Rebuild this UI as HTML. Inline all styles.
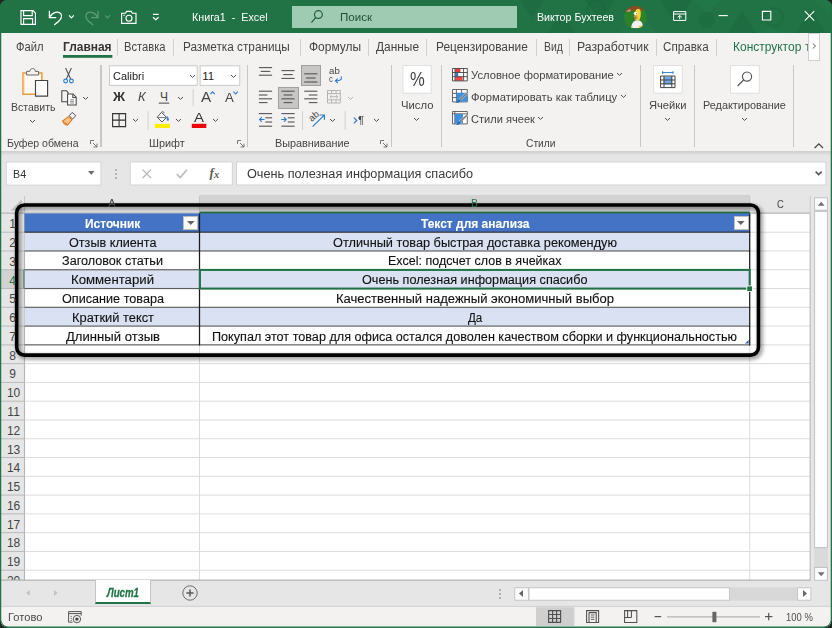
<!DOCTYPE html>
<html><head><meta charset="utf-8">
<style>
*{box-sizing:border-box;margin:0;padding:0}
html,body{width:832px;height:628px;overflow:hidden;background:#232323;font-family:"Liberation Sans",sans-serif;}
#win{position:absolute;left:0;top:0;width:832px;height:628px;border-radius:7px 7px 9px 9px;overflow:hidden;background:#217346;}
.abs{position:absolute}
.t{position:absolute;white-space:nowrap;line-height:1;transform-origin:0 0;}
#title{position:absolute;left:0;top:0;width:832px;height:33px;background:#217346;overflow:hidden}
#search{position:absolute;left:292px;top:6px;width:224.5px;height:22px;background:#9fcbb2;}
#tabs{position:absolute;left:1px;top:33px;width:829.6px;height:28px;background:#f3f2f1}
#ribbon{position:absolute;left:1px;top:61px;width:829.6px;height:90px;background:#f3f2f1}
#fbar{position:absolute;left:1px;top:151px;width:829.6px;height:44px;background:#e6e6e6}
#fshadow{position:absolute;left:1px;top:151px;width:829.6px;height:5px;background:linear-gradient(#cfcfcf,#e6e6e6)}
.vsep{position:absolute;width:1px;background:#c8c6c4}
.tsep{position:absolute;width:1px;background:#d2d0ce;top:39px;height:17px}
.box{position:absolute;background:#fff;border:1px solid #d0d0d0}
.hl{position:absolute;background:#c8c6c4;border:1px solid #a19f9d}
#sheet{position:absolute;left:1px;top:195px;width:829.6px;height:385px;background:#e6e6e6;overflow:hidden}
#grid{position:absolute;left:24px;top:18.3px;width:785px;height:367px;background:#fff;overflow:hidden}
.hline{position:absolute;left:0;height:1px;width:785px;background:#dcdcdc}
.vline{position:absolute;top:0;width:1px;height:367px;background:#dcdcdc}
.rh{position:absolute;left:0;width:23.6px;border-bottom:1px solid #c6c6c6;}
#tabbar{position:absolute;left:1px;top:580px;width:829.6px;height:26.5px;background:#e6e6e6;border-top:1px solid #bdbdbd}
#status{position:absolute;left:1px;top:606.5px;width:829.6px;height:19.5px;background:#f3f2f1;border-top:1px solid #d4d4d4}
svg{position:absolute;overflow:visible}
</style></head><body>
<div id="win">
<div id="title"><!--TITLE--></div>
<div id="tabs"></div>
<div id="ribbon"></div>
<div id="fbar"></div><div id="fshadow"></div>
<div id="sheet"><!--SHEET--></div>
<div id="tabbar"></div>
<div id="status"></div>
<svg style="left:0;top:0" width="832" height="628"><rect x="24.5" y="213.42" width="785.7" height="366.58" fill="#fff"/><rect x="199.5" y="195" width="550.2" height="18.42" fill="#d2d2d2"/><rect x="24.0" y="196" width="1.0" height="17.42" fill="#c6c6c6"/><rect x="199.0" y="196" width="1.0" height="17.42" fill="#c6c6c6"/><rect x="749.2" y="196" width="1.0" height="17.42" fill="#c6c6c6"/><rect x="809.7" y="196" width="1.0" height="17.42" fill="#c6c6c6"/><rect x="1" y="212.62" width="809.2" height="1.0" fill="#ababab"/><rect x="199.5" y="211.62" width="550.2" height="2.3" fill="#1d6b40"/></svg>
<svg style="left:9px;top:198.6px" width="14" height="14"><path d="M12.6 0.6 L12.6 11.4 L1.8 11.4 Z" fill="#bcbcbc"/></svg>
<svg style="left:0;top:0" width="832" height="628"><rect x="1" y="269.75" width="23.5" height="18.78" fill="#d2d2d2"/><rect x="1" y="231.7" width="23.5" height="1.0" fill="#bababa"/><rect x="1" y="250.48" width="23.5" height="1.0" fill="#bababa"/><rect x="1" y="269.25" width="23.5" height="1.0" fill="#bababa"/><rect x="1" y="288.03" width="23.5" height="1.0" fill="#bababa"/><rect x="1" y="306.81" width="23.5" height="1.0" fill="#bababa"/><rect x="1" y="325.59" width="23.5" height="1.0" fill="#bababa"/><rect x="1" y="344.37" width="23.5" height="1.0" fill="#bababa"/><rect x="1" y="363.14" width="23.5" height="1.0" fill="#bababa"/><rect x="1" y="381.92" width="23.5" height="1.0" fill="#bababa"/><rect x="1" y="400.7" width="23.5" height="1.0" fill="#bababa"/><rect x="1" y="419.48" width="23.5" height="1.0" fill="#bababa"/><rect x="1" y="438.26" width="23.5" height="1.0" fill="#bababa"/><rect x="1" y="457.03" width="23.5" height="1.0" fill="#bababa"/><rect x="1" y="475.81" width="23.5" height="1.0" fill="#bababa"/><rect x="1" y="494.59" width="23.5" height="1.0" fill="#bababa"/><rect x="1" y="513.37" width="23.5" height="1.0" fill="#bababa"/><rect x="1" y="532.15" width="23.5" height="1.0" fill="#bababa"/><rect x="1" y="550.92" width="23.5" height="1.0" fill="#bababa"/><rect x="1" y="569.7" width="23.5" height="1.0" fill="#bababa"/><rect x="1" y="588.48" width="23.5" height="1.0" fill="#bababa"/><rect x="23.95" y="213.42" width="1.1" height="366.58" fill="#b6b6b6"/><rect x="23.5" y="269.75" width="2.0" height="18.78" fill="#1d6b40"/><rect x="24.5" y="213.42" width="725.2" height="18.78" fill="#4472c4"/><rect x="24.5" y="232.2" width="725.2" height="18.78" fill="#d9e1f2"/><rect x="24.5" y="269.75" width="725.2" height="18.78" fill="#d9e1f2"/><rect x="24.5" y="307.31" width="725.2" height="18.78" fill="#d9e1f2"/><rect x="25.0" y="363.14" width="785.2" height="1.0" fill="#dcdcdc"/><rect x="25.0" y="381.92" width="785.2" height="1.0" fill="#dcdcdc"/><rect x="25.0" y="400.7" width="785.2" height="1.0" fill="#dcdcdc"/><rect x="25.0" y="419.48" width="785.2" height="1.0" fill="#dcdcdc"/><rect x="25.0" y="438.26" width="785.2" height="1.0" fill="#dcdcdc"/><rect x="25.0" y="457.03" width="785.2" height="1.0" fill="#dcdcdc"/><rect x="25.0" y="475.81" width="785.2" height="1.0" fill="#dcdcdc"/><rect x="25.0" y="494.59" width="785.2" height="1.0" fill="#dcdcdc"/><rect x="25.0" y="513.37" width="785.2" height="1.0" fill="#dcdcdc"/><rect x="25.0" y="532.15" width="785.2" height="1.0" fill="#dcdcdc"/><rect x="25.0" y="550.92" width="785.2" height="1.0" fill="#dcdcdc"/><rect x="25.0" y="569.7" width="785.2" height="1.0" fill="#dcdcdc"/><rect x="25.0" y="588.48" width="785.2" height="1.0" fill="#dcdcdc"/><rect x="749.7" y="231.7" width="60.5" height="1.0" fill="#dcdcdc"/><rect x="749.7" y="250.48" width="60.5" height="1.0" fill="#dcdcdc"/><rect x="749.7" y="269.25" width="60.5" height="1.0" fill="#dcdcdc"/><rect x="749.7" y="288.03" width="60.5" height="1.0" fill="#dcdcdc"/><rect x="749.7" y="306.81" width="60.5" height="1.0" fill="#dcdcdc"/><rect x="749.7" y="325.59" width="60.5" height="1.0" fill="#dcdcdc"/><rect x="749.7" y="344.37" width="60.5" height="1.0" fill="#dcdcdc"/><rect x="199.0" y="344.87" width="1.0" height="235.13" fill="#dcdcdc"/><rect x="749.2" y="344.87" width="1.0" height="235.13" fill="#dcdcdc"/><rect x="809.65" y="213.42" width="1.1" height="366.58" fill="#b4b4b4"/><rect x="24.5" y="231.62" width="725.7" height="1.15" fill="#2e2e2e"/><rect x="24.5" y="250.4" width="725.7" height="1.15" fill="#5c5c5c"/><rect x="24.5" y="269.18" width="725.7" height="1.15" fill="#5c5c5c"/><rect x="24.5" y="287.96" width="725.7" height="1.15" fill="#5c5c5c"/><rect x="24.5" y="306.73" width="725.7" height="1.15" fill="#5c5c5c"/><rect x="24.5" y="325.51" width="725.7" height="1.15" fill="#5c5c5c"/><rect x="24.5" y="344.29" width="725.7" height="1.15" fill="#5c5c5c"/><rect x="198.88" y="213.42" width="1.25" height="131.95" fill="#1c1c1c"/><rect x="749.08" y="213.42" width="1.25" height="131.95" fill="#1c1c1c"/></svg>
<div class="abs" style="left:183.3px;top:215.8px;width:15.2px;height:14.6px;background:#fbfbfb;border:1px solid #bdbdbd"></div>
<svg style="left:187.10000000000002px;top:221.4px" width="8" height="5"><path d="M0 0 L7.6 0 L3.8 4 Z" fill="#646464"/></svg>
<div class="abs" style="left:733.6px;top:215.8px;width:15.2px;height:14.6px;background:#fbfbfb;border:1px solid #bdbdbd"></div>
<svg style="left:737.4px;top:221.4px" width="8" height="5"><path d="M0 0 L7.6 0 L3.8 4 Z" fill="#646464"/></svg>
<svg style="left:0;top:0" width="832" height="628" fill="none"><rect x="199.95" y="269.90399999999994" width="549.7" height="18.677999999999997" stroke="#217346" stroke-width="2"/><rect x="746.8000000000001" y="285.93199999999996" width="5.6" height="5.6" fill="#217346" stroke="#fff" stroke-width="0.9"/></svg>
<svg style="left:745.3000000000001px;top:340.466px" width="4" height="4"><path d="M3.6 0 L3.6 3.6 L0 3.6 Z" fill="#3558b0"/></svg>
<svg style="left:0;top:0" width="832" height="628"><rect x="810.8" y="195" width="20.8" height="385" fill="#e6e6e6"/><rect x="814.2" y="197.4" width="13.6" height="382.6" fill="#dadada"/></svg>
<svg style="left:0;top:0" width="832" height="628"><g fill="#fdfdfd" stroke="#c2c2c2" stroke-width="1"><rect x="814.6" y="197.8" width="12.8" height="12.4"/><rect x="814.6" y="211.4" width="12.8" height="336.2" fill="#fff"/><rect x="814.6" y="567.4" width="12.8" height="12.4"/></g><path d="M817.8 205.8 L824.6 205.8 L821.2 201.8 Z M817.8 572 L824.6 572 L821.2 576 Z" fill="#707070"/></svg>
<svg style="left:0;top:0" width="832" height="628" fill="none"><defs><filter id="osh" x="-5%" y="-10%" width="110%" height="125%"><feGaussianBlur in="SourceAlpha" stdDeviation="2.1"/><feOffset dx="2" dy="2"/><feComponentTransfer><feFuncA type="linear" slope="0.52"/></feComponentTransfer><feMerge><feMergeNode/><feMergeNode in="SourceGraphic"/></feMerge></filter></defs>
<rect x="16.65" y="205.05" width="741.8" height="150.1" rx="7.8" stroke="#000" stroke-width="3.6" filter="url(#osh)"/></svg>
<span class="t" style="left:9.36px;top:217.20px;font:normal normal 12px 'Liberation Sans',sans-serif;color:#444;transform:scaleX(1.0000);">1</span>
<span class="t" style="left:9.36px;top:235.98px;font:normal normal 12px 'Liberation Sans',sans-serif;color:#444;transform:scaleX(1.0000);">2</span>
<span class="t" style="left:9.36px;top:254.75px;font:normal normal 12px 'Liberation Sans',sans-serif;color:#444;transform:scaleX(1.0000);">3</span>
<span class="t" style="left:9.36px;top:273.53px;font:normal normal 12px 'Liberation Sans',sans-serif;color:#217346;transform:scaleX(1.0000);">4</span>
<span class="t" style="left:9.36px;top:292.31px;font:normal normal 12px 'Liberation Sans',sans-serif;color:#444;transform:scaleX(1.0000);">5</span>
<span class="t" style="left:9.36px;top:311.09px;font:normal normal 12px 'Liberation Sans',sans-serif;color:#444;transform:scaleX(1.0000);">6</span>
<span class="t" style="left:9.36px;top:329.87px;font:normal normal 12px 'Liberation Sans',sans-serif;color:#444;transform:scaleX(1.0000);">7</span>
<span class="t" style="left:9.36px;top:348.64px;font:normal normal 12px 'Liberation Sans',sans-serif;color:#444;transform:scaleX(1.0000);">8</span>
<span class="t" style="left:9.36px;top:367.42px;font:normal normal 12px 'Liberation Sans',sans-serif;color:#444;transform:scaleX(1.0000);">9</span>
<span class="t" style="left:6.92px;top:386.20px;font:normal normal 12px 'Liberation Sans',sans-serif;color:#444;transform:scaleX(1.0000);">10</span>
<span class="t" style="left:7.37px;top:404.98px;font:normal normal 12px 'Liberation Sans',sans-serif;color:#444;transform:scaleX(1.0000);">11</span>
<span class="t" style="left:6.92px;top:423.76px;font:normal normal 12px 'Liberation Sans',sans-serif;color:#444;transform:scaleX(1.0000);">12</span>
<span class="t" style="left:6.92px;top:442.53px;font:normal normal 12px 'Liberation Sans',sans-serif;color:#444;transform:scaleX(1.0000);">13</span>
<span class="t" style="left:6.92px;top:461.31px;font:normal normal 12px 'Liberation Sans',sans-serif;color:#444;transform:scaleX(1.0000);">14</span>
<span class="t" style="left:6.92px;top:480.09px;font:normal normal 12px 'Liberation Sans',sans-serif;color:#444;transform:scaleX(1.0000);">15</span>
<span class="t" style="left:6.92px;top:498.87px;font:normal normal 12px 'Liberation Sans',sans-serif;color:#444;transform:scaleX(1.0000);">16</span>
<span class="t" style="left:6.92px;top:517.65px;font:normal normal 12px 'Liberation Sans',sans-serif;color:#444;transform:scaleX(1.0000);">17</span>
<span class="t" style="left:6.92px;top:536.42px;font:normal normal 12px 'Liberation Sans',sans-serif;color:#444;transform:scaleX(1.0000);">18</span>
<span class="t" style="left:6.92px;top:555.20px;font:normal normal 12px 'Liberation Sans',sans-serif;color:#444;transform:scaleX(1.0000);">19</span>
<span class="t" style="left:6.92px;top:573.98px;font:normal normal 12px 'Liberation Sans',sans-serif;color:#444;transform:scaleX(1.0000);">20</span>
<span class="t" style="left:108.40px;top:197.20px;font:normal normal 11.2px 'Liberation Sans',sans-serif;color:#444;transform:scaleX(1.0444);">A</span>
<span class="t" style="left:471.40px;top:197.20px;font:normal normal 11.2px 'Liberation Sans',sans-serif;color:#217346;transform:scaleX(0.9372);">B</span>
<span class="t" style="left:777.00px;top:197.50px;font:normal normal 11.2px 'Liberation Sans',sans-serif;color:#444;transform:scaleX(0.8402);">C</span>
<span class="t" style="left:84.85px;top:216.90px;font:normal bold 12.5px 'Liberation Sans',sans-serif;color:#fff;transform:scaleX(0.9540);-webkit-text-stroke:0.12px #fff;">Источник</span>
<span class="t" style="left:68.75px;top:235.68px;font:normal normal 12.5px 'Liberation Sans',sans-serif;color:#111;transform:scaleX(1.0108);-webkit-text-stroke:0.12px #111;">Отзыв клиента</span>
<span class="t" style="left:62.00px;top:254.45px;font:normal normal 12.5px 'Liberation Sans',sans-serif;color:#111;transform:scaleX(1.0102);-webkit-text-stroke:0.12px #111;">Заголовок статьи</span>
<span class="t" style="left:71.00px;top:273.23px;font:normal normal 12.5px 'Liberation Sans',sans-serif;color:#111;transform:scaleX(1.0542);-webkit-text-stroke:0.12px #111;">Комментарий</span>
<span class="t" style="left:61.50px;top:292.01px;font:normal normal 12.5px 'Liberation Sans',sans-serif;color:#111;transform:scaleX(1.0110);-webkit-text-stroke:0.12px #111;">Описание товара</span>
<span class="t" style="left:71.50px;top:310.79px;font:normal normal 12.5px 'Liberation Sans',sans-serif;color:#111;transform:scaleX(1.0292);-webkit-text-stroke:0.12px #111;">Краткий текст</span>
<span class="t" style="left:65.50px;top:329.57px;font:normal normal 12.5px 'Liberation Sans',sans-serif;color:#111;transform:scaleX(1.0474);-webkit-text-stroke:0.12px #111;">Длинный отзыв</span>
<span class="t" style="left:420.65px;top:216.90px;font:normal bold 12.5px 'Liberation Sans',sans-serif;color:#fff;transform:scaleX(0.9574);-webkit-text-stroke:0.12px #fff;">Текст для анализа</span>
<span class="t" style="left:332.90px;top:235.68px;font:normal normal 12.5px 'Liberation Sans',sans-serif;color:#111;transform:scaleX(1.0192);-webkit-text-stroke:0.12px #111;">Отличный товар быстрая доставка рекомендую</span>
<span class="t" style="left:388.15px;top:254.45px;font:normal normal 12.5px 'Liberation Sans',sans-serif;color:#111;transform:scaleX(0.9992);-webkit-text-stroke:0.12px #111;">Excel: подсчет слов в ячейках</span>
<span class="t" style="left:362.15px;top:273.23px;font:normal normal 12.5px 'Liberation Sans',sans-serif;color:#111;transform:scaleX(1.0128);-webkit-text-stroke:0.12px #111;">Очень полезная информация спасибо</span>
<span class="t" style="left:335.90px;top:292.01px;font:normal normal 12.5px 'Liberation Sans',sans-serif;color:#111;transform:scaleX(1.0424);-webkit-text-stroke:0.12px #111;">Качественный надежный экономичный выбор</span>
<span class="t" style="left:467.75px;top:310.79px;font:normal normal 12.5px 'Liberation Sans',sans-serif;color:#111;transform:scaleX(0.9273);-webkit-text-stroke:0.12px #111;">Да</span>
<span class="t" style="left:212.40px;top:329.57px;font:normal normal 12.5px 'Liberation Sans',sans-serif;color:#111;transform:scaleX(1.0099);-webkit-text-stroke:0.12px #111;">Покупал этот товар для офиса остался доволен качеством сборки и функциональностью</span>
<svg style="left:0;top:0" width="832" height="33" viewBox="0 0 832 33">
<g fill="#1c683d" opacity=".55">
<circle cx="707" cy="20" r="8"/>
<path d="M796 33 L811 9 L826 33 Z"/>
<path d="M660 0 L676 24 L692 0 Z"/>
<path d="M728 33 L742 10 L756 33 Z"/>
<path d="M585 0 L600 22 L615 0 Z"/>
<path d="M548 33 L562 12 L576 33 Z"/>
<path d="M520 0 L532 18 L544 0 Z"/>
</g>
<g fill="none" stroke="#1c683d" stroke-width="2.2" opacity=".5"><circle cx="774" cy="17" r="9"/><circle cx="596" cy="10" r="9"/></g>
<g fill="#278250" opacity=".3">
<path d="M692 0 L722 0 L707 12 Z"/>
<path d="M756 33 L770 28 L784 33 Z"/>
<path d="M620 33 L640 8 L655 33 Z"/>
<path d="M812 0 L832 0 L832 14 Z"/>
</g></svg>
<div id="search"></div>
<svg style="left:0;top:0" width="832" height="33" fill="none" stroke="#fff" stroke-width="1.15">
<path d="M21 10.6 H33 L35.4 13 V24.4 H21 Z M23.6 10.8 V15.6 H32.2 V10.8 M23.6 24.2 V18.6 H32.6 V24.2"/>
<path d="M49.4 10.8 V17.6 H56.2" stroke-width="1.3"/>
<path d="M49.8 17.2 C52.5 12.2 58.5 10.6 61 14 C63.6 17.8 59 21.6 54.2 25" stroke-width="1.3"/>
<path d="M69 15.4 L71.4 17.8 L73.8 15.4" stroke-width="1.2"/>
<g stroke="#5d9b7a"><path d="M98 10.8 V17.6 H91.2" stroke-width="1.3"/>
<path d="M97.6 17.2 C94.9 12.2 88.9 10.6 86.4 14 C83.8 17.8 88.4 21.6 93.2 25" stroke-width="1.3"/>
<path d="M105.2 15.4 L107.6 17.8 L110 15.4" stroke-width="1.2"/></g>
<path d="M121.6 13.2 H125.4 L126.6 11.4 H131.2 L132.4 13.2 H136 V23.4 H121.6 Z"/>
<circle cx="129" cy="18.2" r="3"/><path d="M123.4 15.4 H124.6" />
<path d="M153 14.4 H158.6" stroke-width="1.2"/><path d="M153 17.2 L155.8 19.8 L158.6 17.2" stroke-width="1.2"/>
<g stroke="#1f5c3a" stroke-width="1.2"><circle cx="318.4" cy="14.6" r="3.9"/><path d="M315.6 17.6 L311.4 22.6"/></g>
<path d="M673.6 11.6 H685.8 V20.4 H673.6 Z M673.6 14 H685.8" stroke-width="1"/>
<path d="M679.7 19.2 V15.6 M677.6 17.4 L679.7 15.4 L681.8 17.4" stroke-width="1"/>
<path d="M718.6 15.6 H727.8" stroke-width="1.1"/>
<path d="M762.4 11.4 H770.8 V20 H762.4 Z" stroke-width="1.1"/>
<path d="M804.8 11.2 L814.2 20.6 M814.2 11.2 L804.8 20.6" stroke-width="1.1"/>
</svg>
<span class="t" style="left:192.00px;top:10.80px;font:normal normal 11.5px 'Liberation Sans',sans-serif;color:#fff;transform:scaleX(0.9339);">Книга1&nbsp; -&nbsp; Excel</span>
<span class="t" style="left:339.80px;top:10.80px;font:normal normal 11.5px 'Liberation Sans',sans-serif;color:#1f4f36;transform:scaleX(1.0039);">Поиск</span>
<span class="t" style="left:536.50px;top:11.40px;font:normal normal 11.5px 'Liberation Sans',sans-serif;color:#fff;transform:scaleX(0.9267);">Виктор Бухтеев</span>
<svg style="left:623.9px;top:6.1px" width="22.6" height="22.6" viewBox="0 0 22.4 22.4">
<defs><clipPath id="av"><circle cx="11.2" cy="11.2" r="11.2"/></clipPath></defs>
<g clip-path="url(#av)"><rect width="22.4" height="22.4" fill="#2d8329"/>
<path d="M0 0 H22.4 V3.6 L18 4.6 L11 4.2 L4 5.4 L0 5.8 Z" fill="#8a4a22"/>
<path d="M2 5.4 C4 3.6 5.4 3.2 7 3.6 L6 5.8 Z" fill="#c89a72"/>
<path d="M11.4 5.2 C11.6 1.8 16.4 1.6 16.6 5.6 C17 9 16.2 12.4 15 14.4 L11.6 14.6 C10.6 12 11 8 11.4 5.2 Z" fill="#f7d230"/>
<ellipse cx="11.6" cy="7.4" rx="1.9" ry="1.6" fill="#fff"/><circle cx="12.4" cy="7.6" r="0.5" fill="#222"/>
<path d="M9.8 9.4 C11 8.8 13.2 9.4 13.6 11 C13.8 12.8 12.8 13.8 11.6 13.8 C10.6 13.4 9.6 11.4 9.8 9.4 Z" fill="#c9a04a"/>
<path d="M10.4 11.6 H12" stroke="#3a2a10" stroke-width="0.6"/>
<path d="M7 21.8 C7.4 17.4 9.6 14.8 12 14.4 L15.2 14.4 C17.6 15.4 18.8 17.6 18.4 20.2 L15.6 22 Z" fill="#f1f1f4"/>
<path d="M14.4 20.6 C15.4 19.2 17.4 19 18 20 C17.6 21.4 15.8 22 14.6 21.8 Z" fill="#f2c828"/>
<path d="M6.8 21 L8.2 19.8 L8.4 21.6 Z" fill="#d9a520"/>
</g></svg>
<span class="t" style="left:15.50px;top:40.00px;font:normal normal 12px 'Liberation Sans',sans-serif;color:#444;transform:scaleX(0.9317);">Файл</span>
<span class="t" style="left:63.20px;top:40.00px;font:normal bold 12px 'Liberation Sans',sans-serif;color:#333;transform:scaleX(0.9956);">Главная</span>
<svg style="left:0;top:0" width="832" height="628"><rect x="63" y="55" width="49.4" height="2.8" fill="#217346"/></svg>
<span class="t" style="left:124.30px;top:40.00px;font:normal normal 12px 'Liberation Sans',sans-serif;color:#444;transform:scaleX(0.9303);">Вставка</span>
<span class="t" style="left:183.30px;top:40.00px;font:normal normal 12px 'Liberation Sans',sans-serif;color:#444;transform:scaleX(0.9800);">Разметка страницы</span>
<span class="t" style="left:308.50px;top:40.00px;font:normal normal 12px 'Liberation Sans',sans-serif;color:#444;transform:scaleX(0.9958);">Формулы</span>
<span class="t" style="left:375.50px;top:40.00px;font:normal normal 12px 'Liberation Sans',sans-serif;color:#444;transform:scaleX(0.9917);">Данные</span>
<span class="t" style="left:435.50px;top:40.00px;font:normal normal 12px 'Liberation Sans',sans-serif;color:#444;transform:scaleX(0.9906);">Рецензирование</span>
<span class="t" style="left:543.50px;top:40.00px;font:normal normal 12px 'Liberation Sans',sans-serif;color:#444;transform:scaleX(0.8656);">Вид</span>
<span class="t" style="left:576.80px;top:40.00px;font:normal normal 12px 'Liberation Sans',sans-serif;color:#444;transform:scaleX(1.0217);">Разработчик</span>
<span class="t" style="left:662.80px;top:40.00px;font:normal normal 12px 'Liberation Sans',sans-serif;color:#444;transform:scaleX(0.9707);">Справка</span>
<span class="t" style="left:733.30px;top:40.00px;font:normal normal 12px 'Liberation Sans',sans-serif;color:#217346;transform:scaleX(0.9982);">Конструктор</span>
<span class="t" style="left:804.80px;top:40.00px;font:normal normal 12px 'Liberation Sans',sans-serif;color:#217346;transform:scaleX(1.0545);">т</span>
<div class="tsep" style="left:116.5px"></div>
<div class="tsep" style="left:172.8px"></div>
<div class="tsep" style="left:299.5px"></div>
<div class="tsep" style="left:367.5px"></div>
<div class="tsep" style="left:426.1px"></div>
<div class="tsep" style="left:536.3px"></div>
<div class="tsep" style="left:568.8px"></div>
<div class="tsep" style="left:655.5px"></div>
<div class="tsep" style="left:715.5px"></div>
<div class="abs" style="left:808.2px;top:33.2px;width:11.4px;height:27.4px;background:#fff;border:1px solid #d2d0ce"></div>
<svg style="left:811.8px;top:43.2px" width="5" height="7" fill="none" stroke="#606060" stroke-width="1"><path d="M0.8 0.5 L3.6 3 L0.8 5.5"/></svg>
<div class="vsep" style="left:100.4px;top:65px;height:82px;width:1.2px"></div>
<div class="vsep" style="left:246.9px;top:65px;height:82px;width:1.2px"></div>
<div class="vsep" style="left:390.5px;top:65px;height:82px;width:1.2px"></div>
<div class="vsep" style="left:441.09999999999997px;top:65px;height:82px;width:1.2px"></div>
<div class="vsep" style="left:640.1px;top:65px;height:82px;width:1.2px"></div>
<div class="vsep" style="left:693.6999999999999px;top:65px;height:82px;width:1.2px"></div>
<div class="vsep" style="left:793.3px;top:65px;height:82px;width:1.2px"></div>
<svg style="left:0;top:0" width="832" height="160" fill="none">
<path d="M23 72.9 H41.9 V94.2 H23 Z" fill="#fcf9f4" stroke="#ea9a3c" stroke-width="1.5"/>
<path d="M23.9 73.6 V93.4" stroke="#f6c56f" stroke-width="1"/>
<path d="M26.6 75 V71.4 H29.8 C29.8 67.6 35.4 67.6 35.4 71.4 H38.6 V75 Z" fill="#f3f2f1" stroke="#6a6a6a" stroke-width="1"/>
<path d="M35.5 80.5 H47.6 V96.1 H35.5 Z" fill="#fff" stroke="#444" stroke-width="1.15"/>
</svg>
<span class="t" style="left:10.50px;top:100.70px;font:normal normal 11.5px 'Liberation Sans',sans-serif;color:#444;transform:scaleX(0.9128);">Вставить</span>
<svg style="left:30.0px;top:119.6px" width="5" height="3.4" fill="none" stroke="#505050" stroke-width="1.0"><path d="M0 0 L2.5 2.4 L5 0"/></svg>
<svg style="left:62px;top:67px" width="14" height="18" fill="none">
<path d="M3.6 1 L8.6 12 M9.4 1 L4.4 12" stroke="#555" stroke-width="1.1"/>
<circle cx="3.6" cy="14" r="1.9" stroke="#2b7cd3" stroke-width="1.1"/><circle cx="9.4" cy="14" r="1.9" stroke="#2b7cd3" stroke-width="1.1"/></svg>
<svg style="left:60.6px;top:89.6px" width="17" height="17" fill="none" stroke="#444" stroke-width="1.05">
<path d="M6.4 11.8 H0.8 V0.8 H5.4 L7.2 2.6 V3.8" />
<path d="M6.6 4 H12 L15.2 7.2 V15 H6.6 Z" fill="#fff"/><path d="M11.8 4.2 V7.4 H15"/>
<path d="M9 9.8 H13 M9 11.4 H13 M9 13 H13" stroke="#777" stroke-width="0.8"/></svg>
<svg style="left:82.5px;top:97.0px" width="5" height="3.4" fill="none" stroke="#505050" stroke-width="1.0"><path d="M0 0 L2.5 2.4 L5 0"/></svg>
<svg style="left:61px;top:111px" width="17" height="17" fill="none">
<path d="M11.2 1.4 L14.8 4.6 L11.6 8 L8.2 4.8 Z" fill="#f3f2f1" stroke="#555" stroke-width="1"/>
<path d="M7.6 5.6 L11 8.8 L6.4 14.2 C4.6 13.8 2.4 12 1.6 10 Z" fill="#f7c48a" stroke="#e4791f" stroke-width="1.1"/>
<path d="M3.6 11 L6 13.2" stroke="#e4791f" stroke-width="1"/></svg>
<span class="t" style="left:6.80px;top:137.20px;font:normal normal 11.5px 'Liberation Sans',sans-serif;color:#444;transform:scaleX(0.9148);">Буфер обмена</span>
<svg style="left:90.3px;top:140.3px" width="8" height="8" fill="none" stroke="#666" stroke-width="0.9"><path d="M0.5 4 V0.5 H4"/><path d="M3 3 L7 7 M7 3.6 V7 H3.6"/></svg>
<svg style="left:0;top:0" width="832" height="628"><rect x="109" y="65.4" width="88.6" height="20.3" fill="#c4c2c0"/><rect x="109.85" y="66.25" width="86.9" height="18.6" fill="#fff"/><rect x="199.7" y="65.4" width="40.5" height="20.3" fill="#c4c2c0"/><rect x="200.55" y="66.25" width="38.8" height="18.6" fill="#fff"/></svg>
<span class="t" style="left:112.60px;top:70.00px;font:normal normal 11.5px 'Liberation Sans',sans-serif;color:#222;transform:scaleX(0.9572);">Calibri</span>
<svg style="left:189.5px;top:75.0px" width="5" height="3.4" fill="none" stroke="#505050" stroke-width="1.0"><path d="M0 0 L2.5 2.4 L5 0"/></svg>
<span class="t" style="left:202.32px;top:70.00px;font:normal normal 11.5px 'Liberation Sans',sans-serif;color:#222;transform:scaleX(1.0000);">11</span>
<svg style="left:231.3px;top:75.0px" width="5" height="3.4" fill="none" stroke="#505050" stroke-width="1.0"><path d="M0 0 L2.5 2.4 L5 0"/></svg>
<span class="t" style="left:113.00px;top:90.30px;font:normal bold 12px 'Liberation Sans',sans-serif;color:#333;transform:scaleX(1.1050);">Ж</span>
<span class="t" style="left:137.60px;top:90.30px;font:italic normal 12px 'Liberation Sans',sans-serif;color:#444;transform:scaleX(1.0737);">К</span>
<span class="t" style="left:160.00px;top:90.30px;font:normal normal 12px 'Liberation Sans',sans-serif;color:#444;transform:scaleX(1.0000);">Ч</span>
<svg style="left:0;top:0" width="832" height="628"><rect x="158.8" y="102.6" width="10.4" height="1" fill="#444"/></svg>
<svg style="left:178.0px;top:97.0px" width="5" height="3.4" fill="none" stroke="#505050" stroke-width="1.0"><path d="M0 0 L2.5 2.4 L5 0"/></svg>
<svg style="left:0;top:0" width="832" height="628"><rect x="192.6" y="88.8" width="1" height="17.4" fill="#d2d0ce"/></svg>
<span class="t" style="left:201.30px;top:88.00px;font:normal normal 15.2px 'Liberation Sans',sans-serif;color:#444;transform:scaleX(1.0059);">A</span>
<svg style="left:210.2px;top:90.8px" width="6" height="4" fill="none" stroke="#2b7cd3" stroke-width="1.1"><path d="M0.4 3.2 L2.6 0.8 L4.8 3.2"/></svg>
<span class="t" style="left:225.00px;top:91.00px;font:normal normal 12.5px 'Liberation Sans',sans-serif;color:#444;transform:scaleX(1.0547);">A</span>
<svg style="left:233px;top:91.2px" width="6" height="4" fill="none" stroke="#2b7cd3" stroke-width="1.1"><path d="M0.4 0.6 L2.6 3 L4.8 0.6"/></svg>
<svg style="left:111.8px;top:112.6px" width="14.2" height="14.2" fill="none" stroke="#333" stroke-width="1.1"><path d="M0.6 0.6 H13.6 V13.6 H0.6 Z M7.1 0.6 V13.6 M0.6 7.1 H13.6"/></svg>
<svg style="left:133.3px;top:119.39999999999999px" width="5" height="3.4" fill="none" stroke="#505050" stroke-width="1.0"><path d="M0 0 L2.5 2.4 L5 0"/></svg>
<svg style="left:0;top:0" width="832" height="628"><rect x="147.6" y="111.2" width="1" height="18.8" fill="#d2d0ce"/></svg>
<svg style="left:155px;top:111px" width="16" height="13" fill="none">
<path d="M6.4 1.4 L11.6 6.4 L7 11 L2.2 6.2 Z" fill="#fff" stroke="#555" stroke-width="1"/>
<path d="M3 6.6 H11" stroke="#555" stroke-width="0.8"/>
<path d="M12.2 5.4 C13.6 7.4 14.2 8.6 13 9.8 C11.8 9.4 12 7.4 12.2 5.4 Z" fill="#2b7cd3" stroke="#2b7cd3" stroke-width="0.6"/>
<path d="M6.6 1.2 C7.6 0 9.2 0.6 8.8 2.2" stroke="#555" stroke-width="0.9"/></svg>
<svg style="left:0;top:0" width="832" height="628"><rect x="155" y="123.8" width="15" height="4.2" fill="#ffee00"/></svg>
<svg style="left:176.3px;top:119.39999999999999px" width="5" height="3.4" fill="none" stroke="#505050" stroke-width="1.0"><path d="M0 0 L2.5 2.4 L5 0"/></svg>
<span class="t" style="left:194.30px;top:110.40px;font:normal normal 13.2px 'Liberation Sans',sans-serif;color:#333;transform:scaleX(1.1368);">A</span>
<svg style="left:0;top:0" width="832" height="628"><rect x="191.8" y="123.8" width="14.5" height="4.2" fill="#f00000"/></svg>
<svg style="left:213.0px;top:119.39999999999999px" width="5" height="3.4" fill="none" stroke="#505050" stroke-width="1.0"><path d="M0 0 L2.5 2.4 L5 0"/></svg>
<span class="t" style="left:149.30px;top:137.20px;font:normal normal 11.5px 'Liberation Sans',sans-serif;color:#444;transform:scaleX(0.9434);">Шрифт</span>
<svg style="left:236.7px;top:140.3px" width="8" height="8" fill="none" stroke="#666" stroke-width="0.9"><path d="M0.5 4 V0.5 H4"/><path d="M3 3 L7 7 M7 3.6 V7 H3.6"/></svg>
<div class="hl" style="left:300.6px;top:64.6px;width:20.6px;height:21px"></div>
<div class="hl" style="left:278px;top:87px;width:20.8px;height:21.6px"></div>
<svg style="left:0;top:0" width="832" height="628"><rect x="258.9" y="67.05" width="13.2" height="1.1" fill="#555"/><rect x="260.7" y="70.85" width="9.6" height="1.1" fill="#555"/><rect x="258.9" y="74.65" width="13.2" height="1.1" fill="#555"/><rect x="281.4" y="70.05" width="13.2" height="1.1" fill="#555"/><rect x="283.2" y="74.05" width="9.6" height="1.1" fill="#555"/><rect x="281.4" y="77.85" width="13.2" height="1.1" fill="#555"/><rect x="304.2" y="73.25" width="13.2" height="1.1" fill="#555"/><rect x="306.0" y="77.45" width="9.6" height="1.1" fill="#555"/><rect x="304.2" y="81.45" width="13.2" height="1.1" fill="#555"/></svg>
<span class="t" style="left:329.20px;top:66.40px;font:normal normal 9px 'Liberation Sans',sans-serif;color:#444;transform:scaleX(1.0783);">ab</span>
<span class="t" style="left:329.40px;top:74.20px;font:normal normal 9px 'Liberation Sans',sans-serif;color:#444;transform:scaleX(0.8444);">c</span>
<svg style="left:334px;top:76px" width="9" height="8" fill="none" stroke="#2b7cd3" stroke-width="1.1"><path d="M7.2 0.4 C8.2 3.6 6.2 5 1.6 4.8 M3.8 2.6 L1.4 4.8 L3.8 7"/></svg>
<svg style="left:0;top:0" width="832" height="628"><rect x="258.9" y="90.65" width="13.2" height="1.1" fill="#555"/><rect x="258.9" y="94.45" width="8.6" height="1.1" fill="#555"/><rect x="258.9" y="98.25" width="13.2" height="1.1" fill="#555"/><rect x="258.9" y="102.05" width="8.6" height="1.1" fill="#555"/><rect x="281.4" y="90.65" width="13.2" height="1.1" fill="#555"/><rect x="283.7" y="94.45" width="8.6" height="1.1" fill="#555"/><rect x="281.4" y="98.25" width="13.2" height="1.1" fill="#555"/><rect x="283.7" y="102.05" width="8.6" height="1.1" fill="#555"/><rect x="304.2" y="90.65" width="13.2" height="1.1" fill="#555"/><rect x="308.8" y="94.45" width="8.6" height="1.1" fill="#555"/><rect x="304.2" y="98.25" width="13.2" height="1.1" fill="#555"/><rect x="308.8" y="102.05" width="8.6" height="1.1" fill="#555"/></svg>
<svg style="left:327px;top:90.4px" width="14" height="14" fill="none" stroke="#b5b3b1" stroke-width="1">
<path d="M0.5 0.5 H13.3 V13 H0.5 Z M0.5 3.6 H13.3 M0.5 9.8 H13.3 M4.6 0.5 V3.6 M9 0.5 V3.6 M4.6 9.8 V13 M9 9.8 V13"/>
<path d="M3 6.7 H10.8 M4.6 5.2 L3 6.7 L4.6 8.2 M9.2 5.2 L10.8 6.7 L9.2 8.2"/></svg>
<svg style="left:348.3px;top:97.0px" width="5" height="3.4" fill="none" stroke="#b5b3b1" stroke-width="1.0"><path d="M0 0 L2.5 2.4 L5 0"/></svg>
<svg style="left:0;top:0" width="832" height="628"><rect x="258.9" y="113.05" width="13.2" height="1.1" fill="#555"/><rect x="258.9" y="125.65" width="13.2" height="1.1" fill="#555"/><rect x="265.3" y="117.25" width="6.8" height="1.1" fill="#555"/><rect x="265.3" y="121.45" width="6.8" height="1.1" fill="#555"/></svg>
<svg style="left:258.9px;top:116.4px" width="6" height="7" fill="none" stroke="#2b7cd3" stroke-width="1.1"><path d="M5.6 3.5 H0.8 M2.8 1.2 L0.6 3.5 L2.8 5.8"/></svg>
<svg style="left:0;top:0" width="832" height="628"><rect x="281.4" y="113.05" width="13.2" height="1.1" fill="#555"/><rect x="281.4" y="125.65" width="13.2" height="1.1" fill="#555"/><rect x="287.8" y="117.25" width="6.8" height="1.1" fill="#555"/><rect x="287.8" y="121.45" width="6.8" height="1.1" fill="#555"/></svg>
<svg style="left:281.4px;top:116.4px" width="6" height="7" fill="none" stroke="#2b7cd3" stroke-width="1.1"><path d="M0.2 3.5 H5 M3 1.2 L5.2 3.5 L3 5.8"/></svg>
<svg style="left:0;top:0" width="832" height="628"><rect x="302" y="111.2" width="1" height="18.8" fill="#d2d0ce"/></svg>
<svg style="left:309.4px;top:109.4px" width="20" height="20" fill="none">
<text x="1" y="10" font-family="Liberation Sans" font-size="9.5" fill="#444" stroke="none" transform="rotate(-40 6 9)">ab</text>
<path d="M3.6 17.6 L15 6.4 M10.6 6 H15.4 V10.8" stroke="#2b7cd3" stroke-width="1.2"/></svg>
<svg style="left:329.5px;top:119.39999999999999px" width="5" height="3.4" fill="none" stroke="#505050" stroke-width="1.0"><path d="M0 0 L2.5 2.4 L5 0"/></svg>
<svg style="left:0;top:0" width="832" height="628"><rect x="344.6" y="111.2" width="1" height="18.8" fill="#d2d0ce"/></svg>
<svg style="left:353px;top:116.6px" width="5" height="7" fill="none" stroke="#2b7cd3" stroke-width="1.2"><path d="M0.8 0.6 L3.8 3.5 L0.8 6.4"/></svg>
<span class="t" style="left:358.40px;top:113.60px;font:normal normal 11px 'Liberation Sans',sans-serif;color:#444;transform:scaleX(1.0470);">¶</span>
<svg style="left:373.5px;top:119.39999999999999px" width="5" height="3.4" fill="none" stroke="#505050" stroke-width="1.0"><path d="M0 0 L2.5 2.4 L5 0"/></svg>
<span class="t" style="left:274.50px;top:137.20px;font:normal normal 11.5px 'Liberation Sans',sans-serif;color:#444;transform:scaleX(0.9410);">Выравнивание</span>
<svg style="left:380.3px;top:140.3px" width="8" height="8" fill="none" stroke="#666" stroke-width="0.9"><path d="M0.5 4 V0.5 H4"/><path d="M3 3 L7 7 M7 3.6 V7 H3.6"/></svg>
<svg style="left:0;top:0" width="832" height="628"><rect x="402.5" y="65.2" width="29.1" height="28.4" fill="#dddbd9"/><rect x="403.35" y="66.05" width="27.4" height="26.7" fill="#fff"/></svg>
<span class="t" style="left:409.60px;top:66.60px;font:normal normal 21px 'Liberation Sans',sans-serif;color:#444;transform:scaleX(0.7920);">%</span>
<span class="t" style="left:400.60px;top:98.90px;font:normal normal 11.5px 'Liberation Sans',sans-serif;color:#444;transform:scaleX(0.9795);">Число</span>
<svg style="left:413.9px;top:118.39999999999999px" width="5" height="3.4" fill="none" stroke="#505050" stroke-width="1.0"><path d="M0 0 L2.5 2.4 L5 0"/></svg>
<svg style="left:452.4px;top:67.6px" width="16" height="14" fill="none">
<rect x="0.5" y="0.5" width="14.8" height="12.4" fill="#fff"/>
<rect x="3.2" y="0.6" width="5.2" height="3.8" fill="#f0383a"/>
<rect x="3.2" y="4.6" width="3" height="4" fill="#2b7cd3"/>
<rect x="3.2" y="8.8" width="7.4" height="4" fill="#f0484a"/>
<path d="M0.5 0.5 H15.3 V12.9 H0.5 Z M0.5 4.5 H15.3 M0.5 8.7 H15.3 M3 0.5 V12.9 M11.6 0.5 V12.9" stroke="#444" stroke-width="0.9"/></svg>
<svg style="left:452.4px;top:89.2px" width="17" height="15" fill="none">
<rect x="0.5" y="0.5" width="14.8" height="12.4" fill="#fff"/>
<path d="M0.5 0.5 H15.3 V12.9 H0.5 Z M0.5 4.4 H15.3 M0.5 8.6 H15.3 M4.4 0.5 V12.9 M9.6 0.5 V12.9" stroke="#555" stroke-width="0.9"/>
<rect x="4.6" y="3.8" width="10.8" height="8.6" fill="#3d8fdf"/>
<path d="M14.4 3.4 L15.8 4.8 L8.6 11.6 L7 10.2 Z" fill="#7a7a7a" stroke="#f3f2f1" stroke-width="0.5"/>
<path d="M7 10 L8.8 11.8 C7.6 13.8 5.4 14.2 3.6 13.6 C5.4 13 5.6 11 7 10 Z" fill="#1e6fc4"/></svg>
<svg style="left:452.4px;top:110.8px" width="17" height="15" fill="none">
<rect x="0.5" y="0.5" width="14.8" height="12.4" fill="#fff"/>
<path d="M0.5 0.5 H15.3 V12.9 H0.5 Z M0.5 2.8 H15.3 M2.8 0.5 V12.9" stroke="#555" stroke-width="0.9"/>
<rect x="3" y="3" width="8" height="9.2" fill="#3d8fdf"/>
<path d="M14.4 3.4 L15.8 4.8 L8.6 11.6 L7 10.2 Z" fill="#7a7a7a" stroke="#f3f2f1" stroke-width="0.5"/>
<path d="M7 10 L8.8 11.8 C7.6 13.8 5.4 14.2 3.6 13.6 C5.4 13 5.6 11 7 10 Z" fill="#1e6fc4"/></svg>
<span class="t" style="left:470.60px;top:68.80px;font:normal normal 11.5px 'Liberation Sans',sans-serif;color:#444;transform:scaleX(0.9760);">Условное форматирование</span>
<svg style="left:616.9px;top:72.6px" width="5" height="3.4" fill="none" stroke="#505050" stroke-width="1.0"><path d="M0 0 L2.5 2.4 L5 0"/></svg>
<span class="t" style="left:470.60px;top:90.60px;font:normal normal 11.5px 'Liberation Sans',sans-serif;color:#444;transform:scaleX(0.9771);">Форматировать как таблицу</span>
<svg style="left:621.1px;top:94.6px" width="5" height="3.4" fill="none" stroke="#505050" stroke-width="1.0"><path d="M0 0 L2.5 2.4 L5 0"/></svg>
<span class="t" style="left:470.60px;top:112.50px;font:normal normal 11.5px 'Liberation Sans',sans-serif;color:#444;transform:scaleX(0.9627);">Стили ячеек</span>
<svg style="left:537.9px;top:116.6px" width="5" height="3.4" fill="none" stroke="#505050" stroke-width="1.0"><path d="M0 0 L2.5 2.4 L5 0"/></svg>
<span class="t" style="left:526.00px;top:137.20px;font:normal normal 11.5px 'Liberation Sans',sans-serif;color:#444;transform:scaleX(0.8901);">Стили</span>
<svg style="left:0;top:0" width="832" height="628"><rect x="653.3" y="65.2" width="29.3" height="28.4" fill="#dddbd9"/><rect x="654.15" y="66.05" width="27.6" height="26.7" fill="#fff"/></svg>
<svg style="left:660px;top:70.8px" width="16" height="18" fill="none">
<path d="M2.6 1.6 H13 M2.6 0.2 V3 M13 0.2 V3" stroke="#2b7cd3" stroke-width="1"/>
<rect x="3.6" y="5.6" width="8.6" height="8" fill="#6fa8e6"/>
<path d="M0.6 5 H15 V16.6 H0.6 Z M0.6 9 H15 M0.6 12.8 H15 M4 5 V16.6 M11.8 5 V16.6" stroke="#444" stroke-width="1"/></svg>
<span class="t" style="left:649.20px;top:98.90px;font:normal normal 11.5px 'Liberation Sans',sans-serif;color:#444;transform:scaleX(0.9695);">Ячейки</span>
<svg style="left:664.7px;top:118.39999999999999px" width="5" height="3.4" fill="none" stroke="#505050" stroke-width="1.0"><path d="M0 0 L2.5 2.4 L5 0"/></svg>
<svg style="left:0;top:0" width="832" height="628"><rect x="730.1" y="65.2" width="29.6" height="28.4" fill="#dddbd9"/><rect x="730.95" y="66.05" width="27.9" height="26.7" fill="#fff"/></svg>
<svg style="left:736px;top:70px" width="18" height="18" fill="none" stroke="#555" stroke-width="1.2"><circle cx="11" cy="6.6" r="4.6"/><path d="M7.6 10 L1.6 16"/></svg>
<span class="t" style="left:703.00px;top:98.90px;font:normal normal 11.5px 'Liberation Sans',sans-serif;color:#444;transform:scaleX(0.9451);">Редактирование</span>
<svg style="left:741.7px;top:118.39999999999999px" width="5" height="3.4" fill="none" stroke="#505050" stroke-width="1.0"><path d="M0 0 L2.5 2.4 L5 0"/></svg>
<svg style="left:813.6px;top:142.6px" width="10" height="6" fill="none" stroke="#444" stroke-width="1.2"><path d="M0.6 5 L4.8 0.9 L9 5"/></svg>
<svg style="left:0;top:0" width="832" height="628"><rect x="5.9" y="161.6" width="95.4" height="23.9" fill="#cfcfcf"/><rect x="6.75" y="162.45" width="93.7" height="22.2" fill="#fff"/></svg>
<span class="t" style="left:12.90px;top:168.20px;font:normal normal 11.5px 'Liberation Sans',sans-serif;color:#333;transform:scaleX(0.9305);">B4</span>
<svg style="left:88.2px;top:171px" width="7" height="4"><path d="M0 0 H6.6 L3.3 3.8 Z" fill="#6a6a6a"/></svg>
<div class="abs" style="left:114.8px;top:168.9px;width:2px;height:2px;background:#a2a2a2;border-radius:1px"></div>
<div class="abs" style="left:114.8px;top:172.7px;width:2px;height:2px;background:#a2a2a2;border-radius:1px"></div>
<div class="abs" style="left:114.8px;top:176.5px;width:2px;height:2px;background:#a2a2a2;border-radius:1px"></div>
<svg style="left:0;top:0" width="832" height="628"><rect x="129.8" y="161.5" width="102.9" height="23.9" fill="#cfcfcf"/><rect x="130.65" y="162.35" width="101.2" height="22.2" fill="#fff"/></svg>
<svg style="left:142.4px;top:169.2px" width="10" height="10" fill="none" stroke="#b6b6b6" stroke-width="1.3"><path d="M0.6 0.6 L9 9 M9 0.6 L0.6 9"/></svg>
<svg style="left:176px;top:169px" width="12" height="10" fill="none" stroke="#bcbcbc" stroke-width="1.7"><path d="M0.8 5.2 L4.2 8.6 L11 0.8"/></svg>
<svg style="left:209.2px;top:166.4px" width="14" height="16"><text x="0.4" y="11.4" font-family="Liberation Serif" font-style="italic" font-weight="bold" font-size="13" fill="#5c5c5c">f</text><text x="5" y="11.8" font-family="Liberation Serif" font-style="italic" font-weight="bold" font-size="10.5" fill="#5c5c5c">x</text></svg>
<svg style="left:0;top:0" width="832" height="628"><rect x="236.2" y="161.6" width="590.1" height="23.8" fill="#cfcfcf"/><rect x="237.05" y="162.45" width="588.4" height="22.1" fill="#fff"/></svg>
<span class="t" style="left:247.40px;top:167.00px;font:normal normal 12px 'Liberation Sans',sans-serif;color:#3a3a3a;transform:scaleX(1.0574);">Очень полезная информация спасибо</span>
<svg style="left:814.6px;top:171.2px" width="8" height="5" fill="none" stroke="#555" stroke-width="1.5"><path d="M0.6 0.6 L3.6 3.6 L6.6 0.6"/></svg>
<svg style="left:0;top:0" width="832" height="628"><rect x="1" y="580" width="830" height="26.6" fill="#e6e6e6"/><rect x="1" y="579.6" width="809.8" height="1" fill="#a6a6a6"/></svg>
<svg style="left:0;top:0" width="832" height="628"><rect x="814.6" y="567.5" width="12.8" height="12.8" fill="#fdfdfd" stroke="#c2c2c2"/><path d="M817.8 572.2 L824.6 572.2 L821.2 576.2 Z" fill="#707070"/></svg>
<svg style="left:26.2px;top:589.8px" width="4" height="6"><path d="M3.8 0 V5.8 L0 2.9 Z" fill="#c2c2c2"/></svg>
<svg style="left:53.6px;top:589.8px" width="4" height="6"><path d="M0 0 V5.8 L3.8 2.9 Z" fill="#c2c2c2"/></svg>
<div class="abs" style="left:94.6px;top:580px;width:56.8px;height:23.6px;background:#fff;border-left:1px solid #c4c4c4;border-right:1px solid #c4c4c4;border-bottom:2px solid #217346"></div>
<span class="t" style="left:106.80px;top:586.00px;font:italic bold 12px 'Liberation Sans',sans-serif;color:#217346;transform:scaleX(0.8082);-webkit-text-stroke:0.3px #217346;">Лист1</span>
<svg style="left:181.5px;top:585px" width="16" height="16" fill="none" stroke="#6e6e6e" stroke-width="1"><circle cx="8" cy="8" r="7.2"/><path d="M8 4.4 V11.6 M4.4 8 H11.6" stroke="#5a5a5a" stroke-width="1.5"/></svg>
<div class="abs" style="left:498.6px;top:588.6px;width:2px;height:2px;background:#9c9c9c;border-radius:1px"></div>
<div class="abs" style="left:498.6px;top:592.8px;width:2px;height:2px;background:#9c9c9c;border-radius:1px"></div>
<div class="abs" style="left:498.6px;top:597px;width:2px;height:2px;background:#9c9c9c;border-radius:1px"></div>
<svg style="left:0;top:0" width="832" height="628"><rect x="514.4" y="587.4" width="296.8" height="13.2" fill="#d8d8d8"/><rect x="514.4" y="587.4" width="14.4" height="13.2" fill="#c4c4c4"/><rect x="515.25" y="588.25" width="12.7" height="11.5" fill="#fdfdfd"/></svg>
<svg style="left:519.4px;top:590.4px" width="4" height="7"><path d="M4 0 V7 L0 3.5 Z" fill="#666"/></svg>
<svg style="left:0;top:0" width="832" height="628"><rect x="528.6" y="587.4" width="201.2" height="13.2" fill="#c4c4c4"/><rect x="529.45" y="588.25" width="199.5" height="11.5" fill="#fff"/><rect x="797.2" y="587.4" width="14.0" height="13.2" fill="#c4c4c4"/><rect x="798.05" y="588.25" width="12.3" height="11.5" fill="#fdfdfd"/></svg>
<svg style="left:802.6px;top:590.4px" width="4" height="7"><path d="M0 0 V7 L4 3.5 Z" fill="#666"/></svg>
<svg style="left:0;top:0" width="832" height="628"><rect x="1" y="606.2" width="830" height="21" fill="#f3f2f1"/><rect x="1" y="605.9" width="830" height="1" fill="#d0d0d0"/></svg>
<span class="t" style="left:8.00px;top:610.80px;font:normal normal 10.6px 'Liberation Sans',sans-serif;color:#4a4a4a;transform:scaleX(1.0514);">Готово</span>
<svg style="left:68.4px;top:611px" width="15" height="13" fill="none" stroke="#555" stroke-width="1">
<path d="M0.6 0.6 H13.2 V4.6 M0.6 0.6 V11.2 H4.6 M0.6 2.6 H13.2"/><path d="M2.6 5.4 H3.8 M2.6 7.4 H3.8 M2.6 9.4 H3.8" stroke-width="0.9"/><circle cx="8.9" cy="8.1" r="3.7" fill="#f3f2f1"/><circle cx="8.9" cy="8.1" r="1.7" fill="#444" stroke="none"/></svg>
<svg style="left:0;top:0" width="832" height="628"><rect x="536" y="607.2" width="38.4" height="19" fill="#cfcfcf"/></svg>
<svg style="left:548px;top:609.8px" width="14" height="14" fill="none" stroke="#505050" stroke-width="1.15"><path d="M0.6 0.6 H12.6 V12.4 H0.6 Z M0.6 4.5 H12.6 M0.6 8.5 H12.6 M4.6 0.6 V12.4 M8.6 0.6 V12.4"/></svg>
<svg style="left:586px;top:609.8px" width="14" height="14" fill="none" stroke="#505050" stroke-width="1.05"><path d="M0.6 0.6 H12.6 V12.4 H0.6 Z M3 2.6 H10.2 V12.2 M3 2.6 V12.2"/><path d="M4.8 5 H8.4 M4.8 7.2 H8.4 M4.8 9.4 H8.4" stroke-width="0.9"/></svg>
<svg style="left:623.6px;top:609.8px" width="14" height="14" fill="none" stroke="#505050" stroke-width="1.05"><path d="M0.6 0.6 H12.8 V12.4 H0.6 Z M3.6 0.6 V7.4 M7.4 0.6 V7.4 M0.6 7.4 H7.4"/></svg>
<svg style="left:0;top:0" width="832" height="628"><rect x="654.6" y="616" width="6.6" height="1.2" fill="#555"/><rect x="667" y="616.4" width="93" height="1" fill="#a6a6a6"/><rect x="712.4" y="611.8" width="4" height="10.4" fill="#666"/><rect x="765" y="616" width="7.4" height="1.2" fill="#555"/><rect x="768.1" y="612.9" width="1.2" height="7.4" fill="#555"/></svg>
<span class="t" style="left:786.00px;top:610.80px;font:normal normal 10.6px 'Liberation Sans',sans-serif;color:#505050;transform:scaleX(0.8919);">100 %</span>
<svg style="left:0;top:0" width="832" height="628" fill="none"><rect x="0.6" y="-12" width="830.75" height="639.2" rx="7.5" stroke="#217346" stroke-width="1.3"/></svg>
</div>
</body></html>
